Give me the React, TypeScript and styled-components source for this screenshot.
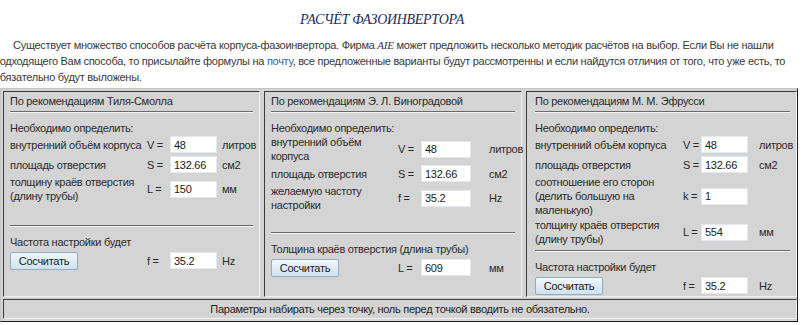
import * as React from 'react'
import styled, { createGlobalStyle } from 'styled-components'

const FONT = `"Liberation Sans", Arial, sans-serif`

const GlobalStyle = createGlobalStyle`
  html, body {
    margin: 0;
    padding: 0;
    background: #fff;
    overflow: hidden;
  }
  body {
    font-family: ${FONT};
    font-size: 11px;
    letter-spacing: -0.28px;
    color: #2a2a2a;
  }
`

const Page = styled.div`
  width: 806px;
  padding-top: 12px;
`

const Title = styled.h1`
  margin: 0 0 9px;
  padding-right: 42px;
  text-align: center;
  font-family: "Liberation Serif", "Times New Roman", serif;
  font-style: italic;
  font-weight: normal;
  font-size: 14px;
  line-height: 16px;
  letter-spacing: -0.3px;
  color: #1e2d5c;
`

const Intro = styled.p`
  margin: 0 0 3px -6px;
  width: 808px;
  text-indent: 19px;
  line-height: 16px;
  color: #3a3a3a;
  a {
    color: #2f63a8;
    text-decoration: none;
  }
  i {
    font-family: "Liberation Serif", serif;
  }
`

const CalcTable = styled.div`
  display: grid;
  grid-template-columns: 257px 258px 1fr;
  column-gap: 4px;
  row-gap: 2px;
  width: 798px;
  box-sizing: border-box;
  padding: 2px;
  background: #d4d4d4;
  border: 1px solid;
  border-color: #c4c4c4 #1f1f1f #1f1f1f #c4c4c4;
`

const Panel = styled.div<{ $left: number }>`
  box-sizing: border-box;
  padding: 2px 3px 1px ${({ $left }) => $left}px;
  border: 1px solid;
  border-color: #3a3a3a #f2f2f2 #f2f2f2 #3a3a3a;
`

const Text = styled.div`
  line-height: 14px;
`

const Rule = styled.hr<{ $top?: number }>`
  margin: ${({ $top }) => $top ?? 3}px 3px 8px 0;
  height: 0;
  border: none;
  border-top: 1px solid #6a6a6a;
  border-bottom: 1px solid #f4f4f4;
`

const Rows = styled.div`
  display: flex;
  flex-direction: column;
  gap: 1px;
`

const FieldRow = styled.div<{ $cols: string }>`
  display: grid;
  grid-template-columns: ${({ $cols }) => $cols};
  align-items: center;
  min-height: 19px;
`

const Label = styled.span`
  line-height: 14px;
`

const Sym = styled.span`
  white-space: nowrap;
`

const Field = styled.input`
  box-sizing: border-box;
  width: 100%;
  height: 17px;
  margin: 0;
  padding: 0 3px;
  border: 1px solid #e3e9ef;
  background: #fff;
  font-family: ${FONT};
  font-size: 11px;
  letter-spacing: -0.28px;
  color: #222;
  outline: none;
`

const Unit = styled.span<{ $gap: number }>`
  padding-left: ${({ $gap }) => $gap}px;
  white-space: nowrap;
`

const Button = styled.button`
  justify-self: start;
  width: 68px;
  height: 18px;
  margin: 0;
  padding: 0;
  border: 1px solid #93acc2;
  border-radius: 2px;
  background: linear-gradient(#f1f7fd, #cfe2f2);
  font-family: ${FONT};
  font-size: 11px;
  letter-spacing: -0.28px;
  color: #1a1a1a;
`

const Footer = styled.div`
  grid-column: 1 / -1;
  box-sizing: border-box;
  height: 20px;
  line-height: 18px;
  text-align: center;
  border: 1px solid;
  border-color: #3a3a3a #f2f2f2 #f2f2f2 #3a3a3a;
  color: #222;
`

type Field = { label: string[]; sym: string; value: string; unit: string }

type Method = {
  title: string
  left: number
  cols: string
  unitGap: number
  ruleTop: number
  fields: Field[]
  resultLabel: string
  result: Field
}

const methods: Method[] = [
  {
    title: 'По рекомендациям Тиля-Смолла',
    left: 6,
    cols: '137px 23px 47px auto',
    unitGap: 5,
    ruleTop: 22,
    fields: [
      { label: ['внутренний объём корпуса'], sym: 'V =', value: '48', unit: 'литров' },
      { label: ['площадь отверстия'], sym: 'S =', value: '132.66', unit: 'см2' },
      { label: ['толщину краёв отверстия', '(длину трубы)'], sym: 'L =', value: '150', unit: 'мм' }
    ],
    resultLabel: 'Частота настройки будет',
    result: { label: [], sym: 'f =', value: '35.2', unit: 'Hz' }
  },
  {
    title: 'По рекомендациям Э. Л. Виноградовой',
    left: 6,
    cols: '127px 23px 50px auto',
    unitGap: 18,
    ruleTop: 20,
    fields: [
      { label: ['внутренний объём', 'корпуса'], sym: 'V =', value: '48', unit: 'литров' },
      { label: ['площадь отверстия'], sym: 'S =', value: '132.66', unit: 'см2' },
      { label: ['желаемую частоту', 'настройки'], sym: 'f =', value: '35.2', unit: 'Hz' }
    ],
    resultLabel: 'Толщина краёв отверстия (длина трубы)',
    result: { label: [], sym: 'L =', value: '609', unit: 'мм' }
  },
  {
    title: 'По рекомендациям М. М. Эфрусси',
    left: 8,
    cols: '148px 18px 47px auto',
    unitGap: 11,
    ruleTop: 4,
    fields: [
      { label: ['внутренний объём корпуса'], sym: 'V =', value: '48', unit: 'литров' },
      { label: ['площадь отверстия'], sym: 'S =', value: '132.66', unit: 'см2' },
      { label: ['соотношение его сторон', '(делить большую на', 'маленькую)'], sym: 'k =', value: '1', unit: '' },
      { label: ['толщину краёв отверстия', '(длину трубы)'], sym: 'L =', value: '554', unit: 'мм' }
    ],
    resultLabel: 'Частота настройки будет',
    result: { label: [], sym: 'f =', value: '35.2', unit: 'Hz' }
  }
]

const MethodPanel = ({ m }: { m: Method }) => (
  <Panel $left={m.left}>
    <Text>{m.title}</Text>
    <Rule />
    <Text>Необходимо определить:</Text>
    <Rows>
      {m.fields.map(f => (
        <FieldRow key={f.sym} $cols={m.cols}>
          <Label>
            {f.label.map((l, i) => (
              <React.Fragment key={l}>
                {i > 0 && <br />}
                {l}
              </React.Fragment>
            ))}
          </Label>
          <Sym>{f.sym}</Sym>
          <Field defaultValue={f.value} />
          <Unit $gap={m.unitGap}>{f.unit}</Unit>
        </FieldRow>
      ))}
    </Rows>
    <Rule $top={m.ruleTop} />
    <Text>{m.resultLabel}</Text>
    <FieldRow $cols={m.cols} style={{ marginTop: 2 }}>
      <Button>Сосчитать</Button>
      <Sym>{m.result.sym}</Sym>
      <Field defaultValue={m.result.value} />
      <Unit $gap={m.unitGap}>{m.result.unit}</Unit>
    </FieldRow>
  </Panel>
)

const App = () => (
  <Page>
    <GlobalStyle />
    <Title>РАСЧЁТ ФАЗОИНВЕРТОРА</Title>
    <Intro>
      Существует множество способов расчёта корпуса-фазоинвертора. Фирма <i>AIE</i> может
      предложить несколько методик расчётов на выбор. Если Вы не нашли подходящего Вам способа,
      то присылайте формулы на <a href="#">почту</a>, все предложенные варианты будут
      рассмотренны и если найдутся отличия от того, что уже есть, то обязательно будут выложены.
    </Intro>
    <CalcTable>
      {methods.map(m => (
        <MethodPanel key={m.title} m={m} />
      ))}
      <Footer>Параметры набирать через точку, ноль перед точкой вводить не обязательно.</Footer>
    </CalcTable>
  </Page>
)

export default App
